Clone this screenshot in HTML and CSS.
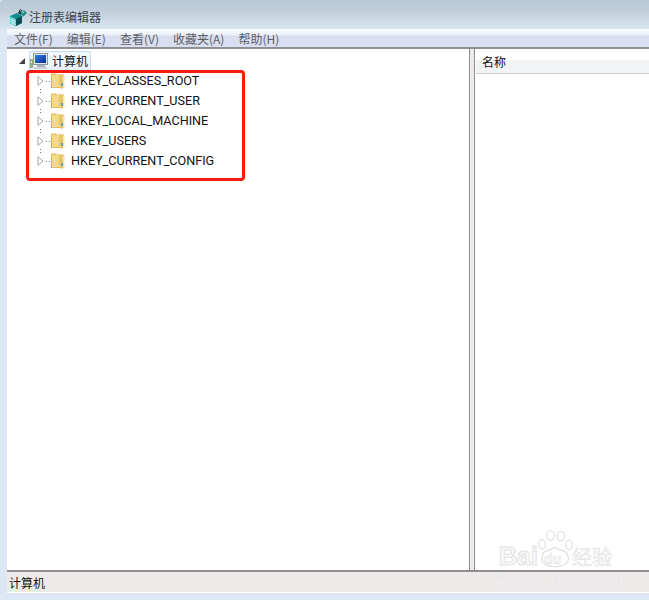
FILE: index.html
```html
<!DOCTYPE html>
<html lang="zh-CN">
<head>
<meta charset="utf-8">
<title>注册表编辑器</title>
<link rel="stylesheet" href="styles.css">
</head>
<body>
<svg class="defs" width="0" height="0" aria-hidden="true">
  <defs>
    <linearGradient id="fold-back" x1="0" y1="0" x2="0" y2="1">
      <stop offset="0" stop-color="#e6c268"/><stop offset="1" stop-color="#d3a540"/>
    </linearGradient>
    <linearGradient id="fold-front" x1="0" y1="0" x2="1" y2="0">
      <stop offset="0" stop-color="#f6df92"/><stop offset="1" stop-color="#e0b64c"/>
    </linearGradient>
    <linearGradient id="screen" x1="0" y1="0" x2="1" y2="1">
      <stop offset="0" stop-color="#2f7fee"/><stop offset="1" stop-color="#0b2c8c"/>
    </linearGradient>
    <symbol id="folder-icon" viewBox="0 0 14 16">
      <path d="M0 1.5C0 .8.5.5 1 .5H5L6 1.5H13V15H0Z" fill="url(#fold-back)"/>
      <path d="M1 2H6V14.5H1Z" fill="#f3da86"/>
      <path d="M6 .5 11.5 2.5V16L6 14Z" fill="url(#fold-front)"/>
      <path d="M11.5 2.5H13.5V15H11.5Z" fill="#f5e6b0"/>
      <rect x="10.4" y="10" width="1.6" height="3" fill="#3d9ad6"/>
    </symbol>
    <symbol id="tri-icon" viewBox="0 0 7 10">
      <path d="M1 .7 6 5 1 9.3Z" fill="#fff" stroke="#a6a6a6"/>
    </symbol>
  </defs>
</svg>
<div class="window">
  <header class="titlebar">
    <svg class="app-icon" width="18" height="18" viewBox="0 0 18 18">
      <path d="M1 8 L8 5 L13 8 L13 15 L7 18 L1 15 Z" fill="#0c8d8d"/>
      <path d="M1 8 L7 11 L7 18 L1 15 Z" fill="#35c4c0"/>
      <path d="M3 9.5V16M5 10.5V17M1 11l6 3M1 13.5l6 3" stroke="#dff" stroke-width=".8" fill="none"/>
      <path d="M7 11 L13 8 L13 15 L7 18 Z" fill="#0b4f55"/>
      <path d="M9 5 L11 1 L14 3 L12 7 Z" fill="#17383c"/>
      <path d="M12 6 L15 2 L18 5 L14 9 Z" fill="#2a8f8a"/>
      <path d="M13 3l2 2M11 2l2 3" stroke="#bfe" stroke-width=".7"/>
    </svg>
    <span class="title">注册表编辑器</span>
  </header>
  <nav class="menubar">
    <span class="menu">文件(F)</span>
    <span class="menu">编辑(E)</span>
    <span class="menu">查看(V)</span>
    <span class="menu">收藏夹(A)</span>
    <span class="menu">帮助(H)</span>
  </nav>
  <main class="panes">
    <section class="tree">
      <div class="root-row">
        <svg class="expander" width="8" height="8" viewBox="0 0 8 8"><path d="M7 1V7H1Z" fill="#404040"/></svg>
        <span class="root-box">
          <svg class="computer" width="18" height="16" viewBox="0 0 18 16">
            <rect x="3.5" y="0.5" width="14" height="11" fill="#e4e9ef" stroke="#8a98a8"/>
            <rect x="5" y="2" width="11" height="8" fill="url(#screen)"/>
            <rect x="7" y="12" width="8" height="2" fill="#aab4c0"/>
            <rect x="4" y="14" width="13" height="2" fill="#c8d0d8"/>
            <rect x="0" y="6" width="3" height="9" fill="#8fb07c"/>
            <rect x="1" y="8" width="1" height="2" fill="#e8f4dc"/>
          </svg>
          <span class="root-label">计算机</span>
        </span>
      </div>
      <ul class="keys">
        <li class="key">
          <svg class="tri" width="7" height="10"><use href="#tri-icon"/></svg>
          <i class="dots"></i>
          <svg class="folder" width="14" height="16"><use href="#folder-icon"/></svg>
          <span class="key-name">HKEY_CLASSES_ROOT</span>
        </li>
        <li class="key">
          <svg class="tri" width="7" height="10"><use href="#tri-icon"/></svg>
          <i class="dots"></i>
          <svg class="folder" width="14" height="16"><use href="#folder-icon"/></svg>
          <span class="key-name">HKEY_CURRENT_USER</span>
        </li>
        <li class="key">
          <svg class="tri" width="7" height="10"><use href="#tri-icon"/></svg>
          <i class="dots"></i>
          <svg class="folder" width="14" height="16"><use href="#folder-icon"/></svg>
          <span class="key-name">HKEY_LOCAL_MACHINE</span>
        </li>
        <li class="key">
          <svg class="tri" width="7" height="10"><use href="#tri-icon"/></svg>
          <i class="dots"></i>
          <svg class="folder" width="14" height="16"><use href="#folder-icon"/></svg>
          <span class="key-name">HKEY_USERS</span>
        </li>
        <li class="key">
          <svg class="tri" width="7" height="10"><use href="#tri-icon"/></svg>
          <i class="dots"></i>
          <svg class="folder" width="14" height="16"><use href="#folder-icon"/></svg>
          <span class="key-name">HKEY_CURRENT_CONFIG</span>
        </li>
      </ul>
      <div class="annotation"></div>
    </section>
    <section class="list">
      <div class="list-head"><span class="col-name">名称</span></div>
    </section>
  </main>
  <footer class="statusbar">计算机</footer>
  <div class="watermark">
    <svg class="paw" width="36" height="38" viewBox="0 0 56 56" preserveAspectRatio="none">
      <g fill="#fff" stroke="#e2e2e2" stroke-width="2">
        <ellipse cx="8" cy="21" rx="5" ry="7"/>
        <ellipse cx="21" cy="8" rx="6" ry="7"/>
        <ellipse cx="37" cy="9" rx="6" ry="7"/>
        <ellipse cx="50" cy="22" rx="5" ry="7"/>
        <path d="M8 38C10 28 20 32 28 25C36 32 46 28 48 38C52 48 42 54 28 54C14 54 4 48 8 38Z"/>
      </g>
    </svg>
    <span class="wm-bai">Bai</span>
    <span class="wm-du">du</span>
    <span class="wm-jy">经验</span>
    <span class="wm-url">jingyan.baidu.com</span>
  </div>
</div>
</body>
</html>
```
FILE: styles.css
```css
* { box-sizing: border-box; }
html, body { margin: 0; padding: 0; background: #dce7f3; }
body { font-family: "Noto Sans CJK SC", "Liberation Sans", sans-serif; font-size: 12px; overflow: hidden; }
.defs { position: absolute; }
.window {
  position: relative;
  width: 649px;
  height: 600px;
  display: flex;
  flex-direction: column;
  overflow: hidden;
  background: #dce7f3;
  border-top-left-radius: 4px;
}
.titlebar {
  height: 29px;
  flex: none;
  display: flex;
  align-items: center;
  padding: 5px 0 0 9px;
  gap: 2px;
  background: linear-gradient(to bottom, #b8c7d5 0%, #c3d1dd 45%, #d8e6f2 100%);
}
.app-icon { flex: none; }
.title { color: #3c4248; line-height: 16px; }
.menubar {
  height: 20px;
  flex: none;
  margin-left: 7px;
  display: flex;
  align-items: center;
  gap: 14px;
  padding: 0 0 0 7px;
  color: #5c6064;
  border-bottom: 2px solid #8e8e92;
  background: linear-gradient(to bottom, #fbfcfe 0, #eef2f9 30%, #d9dff0 40%, #d9dff0 100%);
}
.menu { line-height: 16px; padding-top: 1px; }
.panes {
  flex: 1;
  min-height: 0;
  margin-left: 7px;
  display: flex;
  background: #eeeaea;
}
.tree {
  position: relative;
  width: 463px;
  flex: none;
  background: #fff;
  border-right: 1px solid #8e8e92;
  padding: 2px 0 0 0;
}
.root-row { display: flex; align-items: center; height: 20px; padding-left: 11px; }
.expander { flex: none; margin-right: 3px; }
.root-box {
  display: flex;
  align-items: center;
  height: 20px;
  width: 62px;
  padding-left: 0;
  border: 1px solid #c5d9ec;
  border-radius: 2px;
  background: linear-gradient(to bottom, #f4f9fd, #e6f0fa);
}
.computer { flex: none; margin-right: 4px; }
.root-label { color: #111; line-height: 16px; }
.keys { list-style: none; margin: 0; padding: 0; }
.key {
  display: flex;
  align-items: center;
  height: 20px;
  padding-left: 30px;
  background:
    linear-gradient(#777, #777) 33px 18px / 1px 1px no-repeat,
    linear-gradient(#777, #777) 33px 1px / 1px 1px no-repeat;
}
.key:last-child {
  background: linear-gradient(#777, #777) 33px 1px / 1px 1px no-repeat;
}
.tri { flex: none; }
.dots {
  flex: none;
  width: 4px;
  height: 1px;
  margin: 0 1px 0 2px;
  background: repeating-linear-gradient(to right, #777 0, #777 1px, transparent 1px, transparent 3px);
}
.folder { flex: none; margin-right: 6px; }
.key-name {
  font-family: Roboto, "Liberation Sans", sans-serif;
  font-size: 12.6px;
  line-height: 14px;
  color: #111;
  white-space: nowrap;
}
.annotation {
  position: absolute;
  left: 19px;
  top: 21px;
  width: 219px;
  height: 111px;
  border: 3px solid #fb1a10;
  border-radius: 4px;
}
.list { flex: 1; margin-left: 4px; border-left: 1px solid #8e8e92; background: #fff; min-width: 0; }
.list-head {
  height: 25px;
  margin-left: 1px;
  padding: 5px 0 0 6px;
  border-bottom: 1px solid #d0d0d0;
  background: linear-gradient(to bottom, #fff 11px, #f2f3f5 11px);
  display: flex;
  align-items: flex-start;
}
.col-name { color: #111; line-height: 16px; }
.statusbar {
  flex: none;
  height: 22px;
  margin-left: 7px;
  padding: 1px 0 0 2px;
  line-height: 20px;
  color: #111;
  background: #eeeaea;
  border-top: 2px solid #8e8e92;
}
.window::after {
  content: "";
  display: block;
  flex: none;
  height: 7px;
  margin-left: 7px;
  border-top: 1px solid #fff;
  background: #dce7f3;
}
.watermark {
  position: absolute;
  left: 495px;
  top: 530px;
  width: 154px;
  height: 70px;
  color: #fafafa;
  pointer-events: none;
}
.paw { position: absolute; left: 42px; top: 0; }
.wm-bai {
  position: absolute;
  left: 4px;
  top: 12px;
  font: bold 25px "Liberation Sans", sans-serif;
  -webkit-text-stroke: 1px #e2e2e2;
}
.wm-du {
  position: absolute;
  left: 49px;
  top: 21px;
  font: bold 14px "Liberation Sans", sans-serif;
  -webkit-text-stroke: .6px #e2e2e2;
}
.wm-jy {
  position: absolute;
  left: 77px;
  top: 13px;
  font-size: 20px;
  line-height: 28px;
  -webkit-text-stroke: .6px #e2e2e2;
}
.wm-url {
  position: absolute;
  left: 3px;
  top: 42px;
  font: 15.5px "Liberation Sans", sans-serif;
  white-space: nowrap;
  color: #f7f5f5;
  -webkit-text-stroke: .4px #e6e3e3;
}
```
